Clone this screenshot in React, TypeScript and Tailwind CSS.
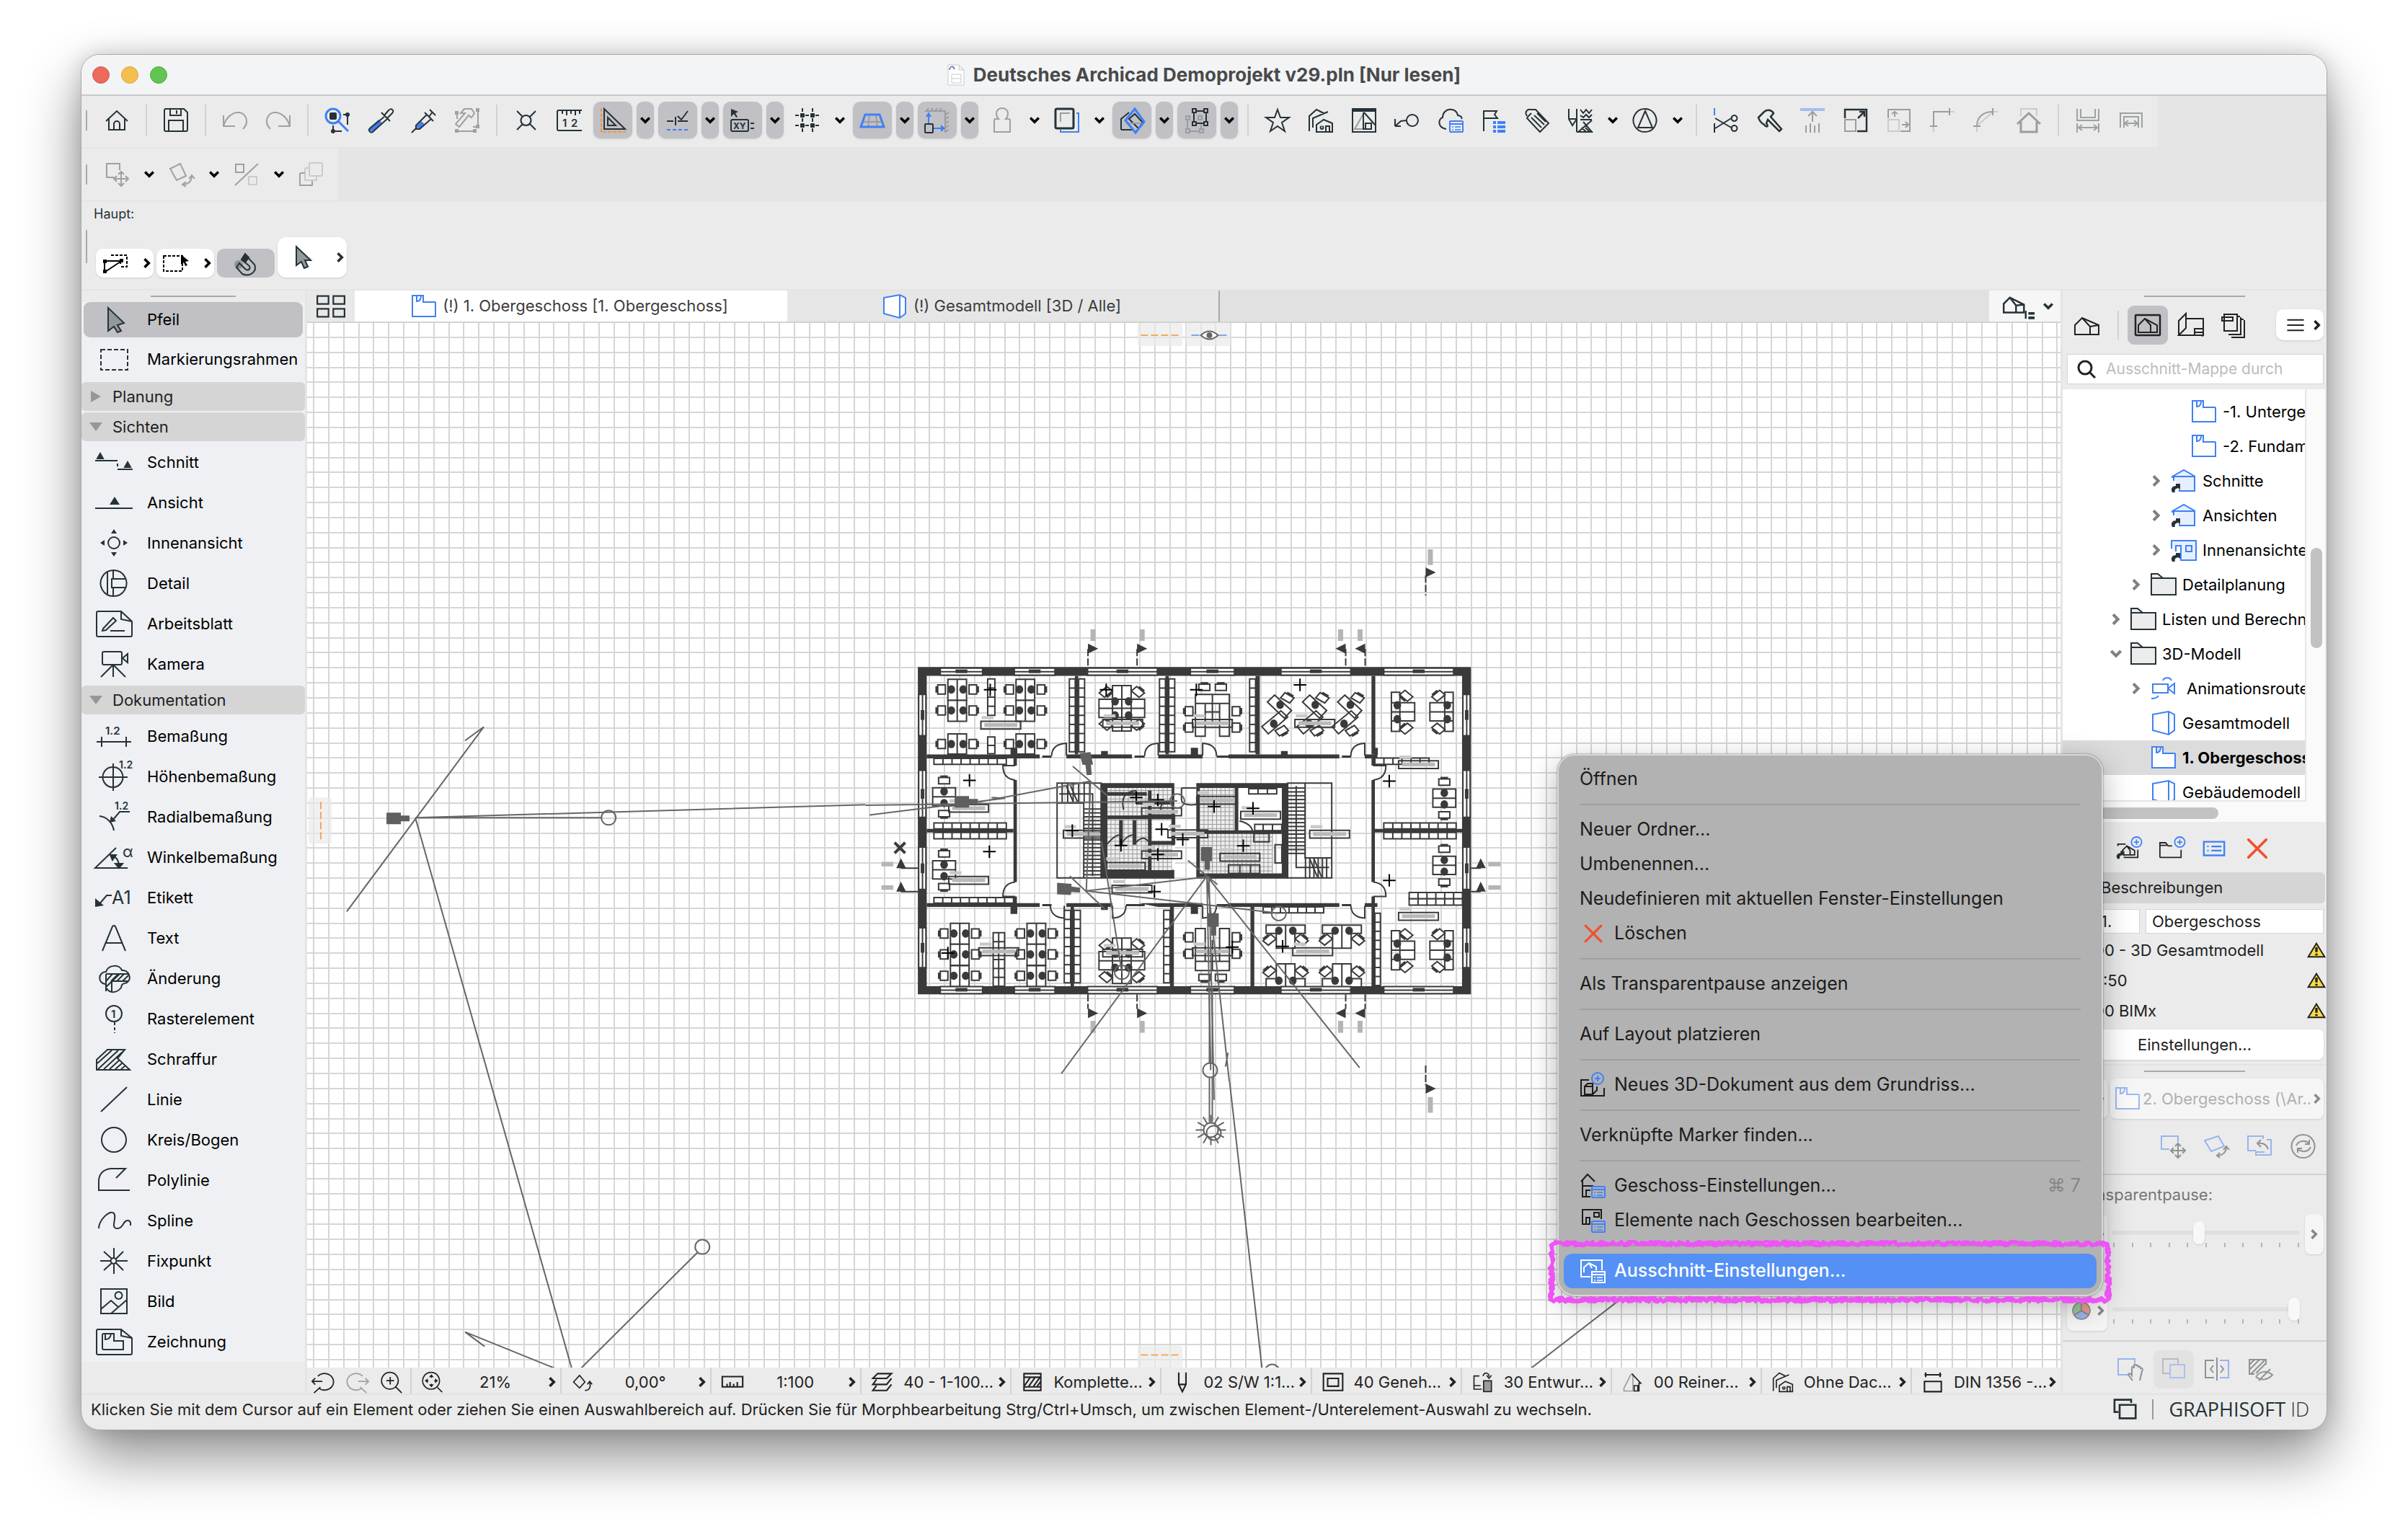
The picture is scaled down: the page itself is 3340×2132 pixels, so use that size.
import type { ReactNode } from "react"

const B = "#4080f5"
const O = "#f0953f"
const G = "#9a9da0"
const L = "#c9cbcd"

const house3d = <path d="M1 31V18L11 8L34 18V31ZM11 8L22 20V31M22 20L34 18" />
const plus = (
  <g stroke={B}>
    <circle cx="26" cy="9" r="8" />
    <path d="M26 5V13M22 9H30" />
  </g>
)
const listBadge = (
  <g stroke={B}>
    <rect x="17" y="19" width="18" height="15" rx="1" />
    <path d="M17 23H35" />
    <path d="M20 27H22M24 27H32M20 31H22M24 31H32" strokeWidth="1.5" />
  </g>
)
const shortcut = <path d="M2 34C-1 28 3 25 7 25V22H13V30L10 28C6 29 5 31 6 34Z" fill="#263238" stroke="none" />

const icons: Record<string, ReactNode> = {
  home: <path d="M3 19L18 5L33 19M7 16V31H29V16M14 31V23A4 4 0 0 1 22 23V31" />,
  save: <path d="M5 2H29L34 7V31A2 2 0 0 1 32 33H4A2 2 0 0 1 2 31V4A2 2 0 0 1 4 2ZM10 2V11H25V2M19 4V9M8 33V18H28V33" />,
  undo: <path d="M2 11V26H18M2 26C5 14 15 6 24 7C34 9 38 21 29 30" />,
  redo: <path d="M34 11V26H18M34 26C31 14 21 6 12 7C2 9 -2 21 7 30" />,
  find: (
    <>
      <circle cx="12" cy="12" r="10" stroke={B} strokeWidth="3" />
      <path d="M19 19L33 33" stroke={B} strokeWidth="3" />
      <rect x="7" y="7" width="10" height="10" rx="2" fill="currentColor" stroke="none" />
      <path d="M32 10V24M26 10H32M12 25V33M12 33H24" />
      <circle cx="32" cy="10" r="3" fill="currentColor" stroke="none" />
      <circle cx="12" cy="33" r="3" fill="currentColor" stroke="none" />
    </>
  ),
  pick: (
    <>
      <path d="M3 32L7 34L20 21L15 17L3 28Z" fill={B} stroke="none" />
      <path d="M23 13L3 29C0 32 4 36 7 34L27 16M19 7L31 19M23 11L29 4C32 0 38 4 34 8L27 15" />
    </>
  ),
  inject: (
    <>
      <path d="M7 27L14 19L19 23L11 30Z" fill={B} stroke="none" />
      <path d="M1 35L7 29M7 30V25L22 10L28 16L12 30ZM19 7L31 19M25 13L30 6M26 3L34 11" />
    </>
  ),
  hammerBox: (
    <>
      <path d="M9 8L14 2H24L28 8L24 14L20 11L7 27L2 23L15 8Z" />
      <path d="M33 6V24M5 33H27M4 8V16M26 27H33" />
      <path d="M1 5H6V10H1ZM30 1H35V6H30ZM1 30H6V35H1ZM26 30H31V35H26ZM30 24H35V29H30Z" fill="currentColor" stroke="none" />
    </>
  ),
  node: <path d="M5 5L13 13M31 5L23 13M5 31L13 23M31 31L23 23M18 11A7 7 0 1 1 17 11Z" />,
  ruler12: (
    <>
      <path d="M35 4H3A2 2 0 0 0 1 6V30A2 2 0 0 0 3 32H35M8 4V9M14 4V11M20 4V9M26 4V11M32 4V9" />
      <text x="8" y="27" fontSize="15" fontWeight="600" fill="currentColor" stroke="none">1</text>
      <text x="20" y="27" fontSize="15" fontWeight="600" fill="currentColor" stroke="none">2</text>
    </>
  ),
  setsquare: (
    <>
      <path d="M6 2L35 30H6ZM11 14L22 25H11Z" />
      <path d="M2 1V34H36" stroke={O} strokeDasharray="5 2" />
    </>
  ),
  guide: (
    <>
      <path d="M3 19H12M18 19H32M15 13V25M18 12L23 17L32 5" />
      <path d="M3 31H34" stroke={B} strokeDasharray="5 3" />
    </>
  ),
  xy: (
    <>
      <path d="M2 2L12 6L8 8L11 13L9 14L6 9L2 13Z" fill="currentColor" stroke="none" />
      <rect x="2" y="17" width="24" height="16" rx="2" />
      <text x="5" y="30" fontSize="12" fontWeight="700" fill="currentColor" stroke="none">XY</text>
      <path d="M29 22H34M29 29H34" />
    </>
  ),
  grid: (
    <>
      <path d="M11 1V35M25 1V35M1 11H35M1 25H35" strokeDasharray="5 2" />
      <path d="M8 11H14M22 11H28M8 25H14M22 25H28M11 8V14M25 8V14M11 22V28M25 22V28" strokeWidth="5" />
    </>
  ),
  persp: (
    <>
      <path d="M4 20H33M14 10L12 27M23 10L25 27" stroke={G} />
      <path d="M8 10H28L34 27H2Z" stroke={B} strokeWidth="3" />
    </>
  ),
  gravity: (
    <>
      <path d="M1 5H29V35M3 5L6 1M9 5L12 1M15 5L18 1M21 5L24 1M29 10L34 7M29 16L34 13M29 22L34 19M29 28L34 25M29 34L34 31" stroke={G} />
      <path d="M6 23V10M13 29H24" stroke={B} />
      <path d="M2 13L6 6L10 13ZM23 24L29 29L23 34Z" fill={B} stroke="none" />
      <rect x="1" y="23" width="11" height="12" rx="1" />
    </>
  ),
  person: <path d="M10 16H13C10 13 10 10 10 8A8 7 0 0 1 26 8C26 10 26 13 23 16H27A2 2 0 0 1 29 18V34H7V18A2 2 0 0 1 10 16Z" />,
  pages: (
    <>
      <rect x="2" y="2" width="25" height="27" rx="2" strokeWidth="3" />
      <path d="M9 20V8H22" stroke={G} />
      <path d="M31 8H34V34H9V31" stroke={B} />
    </>
  ),
  cutcube: (
    <>
      <path d="M3 31V16L14 7M3 31H18M22 9L33 21L27 29L14 16Z" />
      <path d="M14 22H30" stroke={G} />
      <path d="M22 2L35 20L23 35L9 18Z" stroke={B} strokeWidth="3" />
    </>
  ),
  group: (
    <>
      <path d="M3 12H8V17H3ZM20 12H25V17H20ZM3 30H8V35H3ZM22 30H27V35H22ZM5 17V30M8 33H22M24 24V30" stroke={G} />
      <path d="M12 2H17V7H12ZM28 2H33V7H28ZM12 20H17V25H12ZM28 20H33V25H28ZM17 5H28M17 22H28M14 7V20M31 7V20" />
    </>
  ),
  star: <path d="M18 3L22 14H34L24 21L28 33L18 26L8 33L12 21L2 14H14Z" />,
  houses: <path d="M2 33V12L12 3L22 8M7 28V15L28 6M12 34V24L22 17L34 22V34ZM20 26A2 2 0 1 1 19 26M25 34V26H30V34" />,
  facade: (
    <>
      <path d="M2 2H34V34H2ZM18 7L33 24" />
      <path d="M2 2H34V5H2Z" fill="currentColor" />
      <path d="M5 30L17 9V30Z" stroke={G} />
      <path d="M17 7V30H28V22H20V30" />
    </>
  ),
  tagc: <path d="M1 26V16M1 26H9M1 26L9 19L17 18M25 10A8 8 0 1 1 17 19A8 8 0 0 1 25 10" />,
  cloud: (
    <>
      <path d="M12 30C-1 28 1 15 7 14C7 0 26 -1 28 11C34 12 34 15 33 16" />
      {listBadge}
    </>
  ),
  flist: (
    <>
      <path d="M4 33V5H22L19 10L23 15H4M10 15H16" />
      <path d="M17 21H21M23 21H34M17 27H21M23 27H34M17 33H21M23 33H34" stroke={B} strokeWidth="4" />
    </>
  ),
  pencil: <path d="M4 12C0 6 5 2 9 3L16 3L34 22L22 34L4 15C5 12 8 10 10 8M10 14L24 28M14 11L28 24M18 8L30 20" />,
  pencils: <path d="M2 2V16L7 25L13 16V2M13 6V34M2 16H13M18 3L22 8L26 3L30 8L34 3M18 11L22 14L26 10L30 14L34 10M34 18L15 34H34L22 20M20 28L26 34M18 17H34M25 28L31 34" />,
  compass: <path d="M18 2A16 16 0 1 1 17 2ZM18 5L8 28H28Z" />,
  scissors: (
    <>
      <path d="M2 1V11" stroke={B} />
      <path d="M2 22V35M3 15L27 29M3 29L27 14M30 11A4 4 0 1 1 29 11ZM30 25A4 4 0 1 1 29 25Z" />
    </>
  ),
  hammer: <path d="M3 14L11 6C16 2 22 4 24 8L20 13L35 30L32 33L16 17L14 22C18 27 14 28 11 24C6 21 4 18 3 14Z" strokeWidth="2.5" />,
  extend: (
    <>
      <path d="M1 3H35" stroke="#a5bdf0" strokeWidth="4" />
      <path d="M18 20V6M12 12L18 6L24 12M9 25V35M15 22V35M21 25V35M27 22V35" stroke={G} />
    </>
  ),
  resize: (
    <>
      <path d="M3 33H18V17H3Z" stroke={G} />
      <path d="M3 15V3H33V33H20M21 15L30 6M23 6H30V13" strokeWidth="2.5" />
    </>
  ),
  stretch: (
    <>
      <path d="M3 33H18V17H3Z" stroke={L} />
      <path d="M3 15V3H33V33H20M12 13V6M8 9L12 6L16 9M22 24H30M27 20L31 24L27 28" stroke={G} />
    </>
  ),
  corner: (
    <>
      <path d="M6 34V26M28 6H35" stroke={L} />
      <path d="M1 26H11M6 26V6H28M28 1V11" stroke={G} />
    </>
  ),
  fillet: (
    <>
      <path d="M6 34V26M28 6H35M8 24L26 8" stroke={L} />
      <path d="M1 26H11M6 26C6 14 14 6 28 6M28 1V11" stroke={G} />
    </>
  ),
  roofup: (
    <>
      <path d="M7 12V2H29V12" stroke={L} />
      <path d="M2 23L18 8L34 23M7 20V34H29V20" stroke={G} strokeWidth="3" />
    </>
  ),
  span1: <path d="M3 2V18H33V2M8 2V14H28V2M3 22V35M33 22V35M5 28H31M10 24L5 28L10 32M26 24L31 28L26 32" />,
  span2: <path d="M3 28V8H33V28M8 28V13H28V28M10 22H26M14 18L9 22L14 26M22 18L27 22L22 26" />,
  drag: <path d="M14 22H4V3H22V12M24 14V34M14 24H34M20 18L24 14L28 18M20 30L24 34L28 30M18 20L14 24L18 28M30 20L34 24L30 28" />,
  rotate: <path d="M2 10L16 3L24 20L11 26ZM20 32C28 32 32 26 32 20M28 24L32 19L36 24M24 28L19 32L24 35" />,
  mirror: (
    <>
      <path d="M3 4H14V15H3ZM2 33L34 3" />
      <path d="M21 21H32V32H21Z" stroke={L} />
    </>
  ),
  stack: (
    <>
      <rect x="15" y="2" width="18" height="18" rx="2" stroke={L} />
      <path d="M15 9H11A2 2 0 0 0 9 11V26H25V20" stroke={L} />
      <path d="M9 16H4A2 2 0 0 0 2 18V33H19V27" />
    </>
  ),
  selA: (
    <>
      <path d="M12 7H34V23H24" strokeDasharray="4 2" />
      <path d="M3 15H27M3 17V31M4 30L25 16M25 12V19" />
      <path d="M1 13H6V18H1ZM1 27H6V32H1ZM24 12H29V17H24Z" fill="currentColor" stroke="none" />
    </>
  ),
  selB: (
    <>
      <rect x="1" y="8" width="26" height="21" strokeDasharray="4 2" />
      <path d="M25 6L36 15L31 16L34 21L31 22L29 17L25 20Z" fill="currentColor" stroke="none" />
    </>
  ),
  magnet: (
    <>
      <circle cx="8" cy="20" r="6" fill="#8f9497" stroke="none" />
      <path d="M17 6L12 13L23 22C25 27 20 29 17 26L9 18L5 24L13 33C24 38 34 29 30 20Z" />
      <path d="M17 5L12 13L17 17L22 10Z" fill="currentColor" />
    </>
  ),
  arrow: <path d="M9 3V29L16 24L20 33L25 31L21 22H29Z" fill="#93989b" />,
  quad: <path d="M1 5H15V15H1ZM21 5H35V15H21ZM1 21H15V31H1ZM21 21H35V31H21Z" />,
  floor: <path d="M2 3H17V12H33A1 1 0 0 1 34 13V32H2ZM8 3V11C12 11 14 8 14 3" stroke={B} fill="#fff" />,
  cube: <path d="M3 6L25 2L33 6V28L25 34L3 28ZM25 2V34" stroke={B} fill="#fff" />,
  house: house3d,
  houseList: (
    <>
      <path d="M1 25V15L8 8L24 16V25ZM8 8L15 17V25M15 17L24 16" />
      <path d="M26 23V32" />
      <path d="M29 26H36M29 31H36" strokeWidth="3" />
    </>
  ),
  viewmap: (
    <>
      <rect x="1" y="4" width="34" height="28" rx="1" strokeWidth="2.5" />
      <path d="M5 28V18L14 9L31 18V28ZM14 9L22 18V28" />
    </>
  ),
  layout: <path d="M1 32V12L11 2V22L1 32H33A1 1 0 0 0 35 31V9H12M35 23H23V32M23 28H35" />,
  publish: <path d="M4 3H22V26H4ZM1 7H16V12H1ZM27 7V31H10M32 11V35H14M22 6H26M27 10H31" />,
  menu: <path d="M2 8H34M2 18H34M2 28H34" strokeWidth="3" />,
  elev: (
    <>
      <path d="M2 14V12L18 3L34 12M4 12H33V32H12V30" stroke={B} fill="#e6effd" />
      <path d="M4 12H33M4 12V18" stroke={B} />
      {shortcut}
    </>
  ),
  interior: (
    <>
      <path d="M1 16V5H35V32H14V12H7V20" stroke={B} fill="#e6effd" />
      <path d="M21 12H29V20H21Z" stroke={B} />
      {shortcut}
    </>
  ),
  folder: <path d="M1 32V3H10L17 9H35V32ZM1 9H17" fill="#ececec" />,
  anim: <path d="M3 12H24V24H3ZM24 18L33 11V25L24 18M17 7C19 2 27 2 29 7M1 32C6 32 9 31 11 28" stroke={B} />,
  newview: (
    <>
      <path d="M3 14V11H15M12 32H34V20M10 26V21L17 14L29 21V28H12M17 14L22 21V28" />
      {shortcut}
      <g transform="translate(6 -1)">{plus}</g>
    </>
  ),
  newfolder: (
    <>
      <path d="M1 32V9H10L14 14H20M1 32H34V20M1 13H12" />
      <g transform="translate(6 -1)">{plus}</g>
    </>
  ),
  card: <path d="M3 8H33V28H3ZM8 15H10M14 15H29M8 21H10M14 21H29" stroke={B} strokeWidth="2.5" />,
  del: <path d="M5 5L31 31M31 5L5 31" stroke="#ee5330" strokeWidth="4" strokeLinecap="round" />,
  warn: (
    <>
      <path d="M18 4L35 32H1Z" fill="#f7dc45" strokeWidth="3" />
      <path d="M18 12V22M18 25V29" strokeWidth="5" />
    </>
  ),
  dragB: (
    <>
      <path d="M12 22H1V4H24V12" stroke="#97b5ef" />
      <path d="M24 14V34M14 24H34M20 18L24 14L28 18M20 30L24 34L28 30M18 20L14 24L18 28M30 20L34 24L30 28" />
    </>
  ),
  rotB: (
    <>
      <path d="M1 10L20 4L28 18L10 25Z" stroke="#97b5ef" />
      <path d="M18 31C26 31 31 26 31 19M27 23L31 18L35 23M22 27L18 31L22 34" />
    </>
  ),
  backB: (
    <>
      <path d="M12 24H1V4H22V8M27 9H33V30H12V26H24" stroke="#97b5ef" />
      <path d="M29 22C27 16 22 13 15 14M19 9L14 14L19 19" />
    </>
  ),
  sync: <path d="M18 2A16 16 0 1 1 17 2ZM8 17C11 10 20 9 26 14M26 9V15H20M28 19C25 26 16 27 10 22M10 27V21H16" />,
  handB: (
    <>
      <path d="M14 26H1V4H24V10" stroke="#97b5ef" />
      <path d="M21 34L15 26C15 23 18 24 20 27V17C20 14 23 14 23 17V13C23 11 26 11 26 14C27 12 29 12 29 15C31 14 32 15 32 17C34 16 36 18 34 21L31 34" />
    </>
  ),
  overlap: (
    <>
      <path d="M13 24H3V4H24V11M22 12H13V20" stroke="#b9bbbd" />
      <rect x="13" y="12" width="20" height="18" stroke="#aac1ee" />
    </>
  ),
  split: (
    <>
      <path d="M14 6H2V30H14M18 2V34M13 13L9 18L13 23M23 13L27 18L23 23" />
      <path d="M22 6H34V30H22" stroke="#97b5ef" />
    </>
  ),
  hatchEye: <path d="M10 25H3V5H26V12M3 12L10 5M3 19L17 5M5 25L24 6M12 24L26 10M12 29C18 20 27 20 35 26C28 34 19 34 12 29M16 34L32 18" />,
  pie: (
    <>
      <path d="M18 18V3A15 15 0 0 0 5 26Z" fill="#9cc79f" />
      <path d="M18 18V3A15 15 0 0 1 31 26Z" fill="#ec9c8b" />
      <path d="M18 18L5 26A15 15 0 0 0 31 26Z" fill="#97b5ef" />
    </>
  ),
  windows: <path d="M7 22H1V3H27V8M9 11H34V32H9Z" strokeWidth="3" />,
  zback: <path d="M10 9A14 13 0 1 1 12 28M1 17H17M6 12L1 17L6 22M14 26L4 35" />,
  zfwd: <path d="M26 9A14 13 0 1 0 24 28M35 17H19M30 12L35 17L30 22M22 26L32 35" />,
  zin: <path d="M16 3A13 13 0 1 1 15 3ZM25 26L34 35M10 16H22M16 10V22" />,
  zfit: (
    <>
      <path d="M16 2A14 14 0 1 1 15 2ZM26 27L34 35M16 8V11M16 21V24M8 16H11M21 16H24" />
      <path d="M16 5L20 10H12ZM16 27L20 22H12ZM5 16L10 12V20ZM27 16L22 12V20Z" fill="currentColor" stroke="none" />
    </>
  ),
  orient: <path d="M3 18L13 7L22 18L13 28ZM22 32C30 32 32 26 30 18M26 22L30 17L34 22" />,
  scale: <path d="M1 9H35V26H1ZM9 26V21M14 26V18M20 26V21M26 26V18" strokeWidth="2.5" />,
  layers: <path d="M10 4H33L25 12H2ZM8 14L2 22H25L33 12M8 24L2 32H25L33 22" strokeWidth="2.5" />,
  hatch: <path d="M4 4H32V32H4ZM4 10H32M4 26H32M5 24L14 11M12 25L22 11M20 25L30 11M26 25L32 17" strokeWidth="2.5" />,
  pen: <path d="M12 2V22L18 34L24 22V2M12 22H24" strokeWidth="2.5" />,
  frame: <path d="M2 4H34V32H2ZM9 12H27V25H9Z" strokeWidth="2.5" />,
  renov: (
    <>
      <rect x="19" y="16" width="13" height="18" fill={G} />
      <path d="M12 8H3V30H16M18 8C20 1 28 2 28 9M24 7L28 12L32 7M3 24H14" />
    </>
  ),
  house2: (
    <>
      <path d="M15 5L3 28V33H18V5" stroke={G} />
      <path d="M16 4L31 20H28V33H20V24H26V33" />
    </>
  ),
  dim: <path d="M4 6H32M6 2V10M30 2V10M4 17H32V34H4Z" strokeWidth="2.5" />,
  m3d: (
    <>
      <path d="M13 11H2V33H34V22M7 31V20L11 16H18V31ZM7 20H17M18 31L24 25V20" />
      <g transform="translate(-1 0)">{plus}</g>
    </>
  ),
  story: (
    <>
      <path d="M2 12L11 2L21 12M4 10V18H19M4 18V33H15M9 33V24H15" />
      {listBadge}
    </>
  ),
  elem: (
    <>
      <path d="M3 3H31M4 3V23H14V14H9V23M20 7H27V13H20ZM30 3V16" />
      {listBadge}
    </>
  ),
  viewset: (
    <>
      <path d="M15 26H2V3H31V17M6 20V13L13 7L23 12V17M13 7L17 14" />
      <path d="M17 19H35V34H17ZM17 23H35" />
      <path d="M20 27H22M24 27H32M20 31H22M24 31H32" strokeWidth="1.5" />
    </>
  ),
}

const toolIcons: Record<string, ReactNode> = {
  arrow: <path d="M18 3V35L26 29L31 37L36 35L31 27L40 24Z" fill="#93989b" />,
  marquee: <rect x="8" y="6" width="37" height="28" strokeDasharray="6 3" />,
  schnitt: (
    <>
      <path d="M0 18H31M31 22V26M31 30H52" />
      <path d="M3 15L7 8L11 15ZM41 27L45 20L49 27Z" fill="currentColor" />
    </>
  ),
  ansicht: (
    <>
      <path d="M0 28H52" />
      <path d="M20 23L27 12L34 23Z" fill="currentColor" stroke="none" />
    </>
  ),
  innen: (
    <>
      <circle cx="26" cy="20" r="8" />
      <path d="M22 7L26 1L30 7ZM22 33L26 39L30 33ZM13 16L7 20L13 24ZM39 16L45 20L39 24Z" fill="currentColor" stroke="none" />
    </>
  ),
  detail: <path d="M26 2A18 18 0 1 1 25 2ZM17 5V35M25 2V14M25 26V38M43 14H23V26H43" />,
  blatt: <path d="M4 3H36L51 17V36A2 2 0 0 1 49 38H4A2 2 0 0 1 2 36V5A2 2 0 0 1 4 3ZM36 3V14L51 17M11 27L25 12L29 16L15 29L10 30ZM21 30H41" />,
  kamera: <path d="M12 3H35A2 2 0 0 1 37 5V19A2 2 0 0 1 35 21H12A2 2 0 0 1 10 19V5A2 2 0 0 1 12 3ZM38 12L45 6V18ZM25 21V38M25 21L8 38M25 21L42 38" />,
  bem: (
    <>
      <path d="M2 28H50M9 21V35M43 21V35" />
      <text x="14" y="18" fontSize="15" fontWeight="600" fill="currentColor" stroke="none">1.2</text>
    </>
  ),
  hoehe: (
    <>
      <path d="M5 21H45M25 2V40M25 7A14 14 0 1 1 24 7Z" />
      <text x="33" y="9" fontSize="14" fontWeight="600" fill="currentColor" stroke="none">1.2</text>
    </>
  ),
  radial: (
    <>
      <path d="M6 19C16 20 24 28 26 39M24 25L34 13H48" />
      <path d="M20 28L22 19L29 26Z" fill="currentColor" stroke="none" />
      <text x="27" y="10" fontSize="14" fontWeight="600" fill="currentColor" stroke="none">1.2</text>
    </>
  ),
  winkel: (
    <>
      <path d="M0 35H45L0 35L29 7M25 19C30 20 33 26 33 32" />
      <path d="M21 17L29 17L24 24ZM28 29H38L33 35Z" fill="currentColor" />
      <text x="38" y="20" fontSize="22" fill="currentColor" stroke="none">α</text>
    </>
  ),
  etikett: (
    <>
      <path d="M5 30L16 17H23" />
      <path d="M0 21L12 31L0 33Z" fill="currentColor" stroke="none" />
      <text x="23" y="29" fontSize="25" fill="currentColor" stroke="none">A1</text>
    </>
  ),
  text: <path d="M10 38L24 4Q26 2 28 4L42 38M15 27H37" />,
  aend: <path d="M14 28C3 27 4 11 15 11C18 1 34 0 37 9C46 8 52 20 44 26C38 28 37 27 36 33C30 41 20 41 16 34M15 14H46M15 14V38M23 24H46M23 24V40M15 24L24 14M15 32L34 14M22 24L32 14M30 24L40 14M38 24L46 16" />,
  raster: (
    <>
      <circle cx="26" cy="13" r="11" />
      <path d="M27 25V40" strokeDasharray="4 3" />
      <text x="22" y="19" fontSize="15" fontWeight="600" fill="currentColor" stroke="none">1</text>
    </>
  ),
  schraffur: <path d="M2 35V21L17 7H41L31 19L48 35ZM4 34L32 8M12 34L38 10M20 34L33 22M28 34L37 26M36 34L41 30M3 26L23 8" />,
  linie: <path d="M8 37L44 3" />,
  kreis: <circle cx="26" cy="20" r="17" />,
  poly: <path d="M48 34H5V20C6 10 12 5 22 4H42L29 17" />,
  spline: <path d="M5 31C5 20 20 4 26 10C31 16 20 31 31 31C40 31 38 19 46 20Q50 21 49 27" />,
  fix: <path d="M26 2V16M26 24V38M7 20H22M30 20H45M12 7L23 17M39 7L29 17M12 33L23 23M39 33L29 23M26 16A4 4 0 1 1 25 16Z" />,
  bild: <path d="M8 3H44V37H8ZM8 31L22 19L32 28M22 37L44 18M33 7A5 5 0 1 1 32 7Z" />,
  zeichnung: <path d="M4 3H36L51 15V36A2 2 0 0 1 49 38H4A2 2 0 0 1 2 36V5A2 2 0 0 1 4 3ZM36 3V12L51 15M12 9H26V19H39V31H12A2 2 0 0 1 10 29V11A2 2 0 0 1 12 9M14 9V17Q21 17 22 9" />,
}

const Icon = ({ name, className = "size-9" }: { name: string; className?: string }) => (
  <svg viewBox="0 0 36 36" className={`shrink-0 overflow-visible ${className}`} fill="none" stroke="currentColor" strokeWidth="2" aria-hidden="true">
    {icons[name]}
  </svg>
)

const Chevron = ({ down, className = "size-[14px]" }: { down?: boolean; className?: string }) => (
  <svg viewBox="0 0 12 12" className={`shrink-0 ${className}`} fill="none" stroke="currentColor" strokeWidth="3" aria-hidden="true">
    <path d={down ? "M1 3L6 8L11 3" : "M3 1L8 6L3 11"} />
  </svg>
)

const Sep = () => (
  <div className="flex w-[22px] justify-center">
    <div className="h-11 w-[2px] bg-[#d2d2d2]"></div>
  </div>
)

type Tool = { icon: string; on?: boolean; menu?: boolean; off?: boolean }
const bar: (Tool | null)[] = [
  { icon: "home" }, null, { icon: "save" }, null,
  { icon: "undo", off: true }, { icon: "redo", off: true }, null,
  { icon: "find" }, { icon: "pick" }, { icon: "inject" }, { icon: "hammerBox", off: true }, null,
  { icon: "node" }, { icon: "ruler12" },
  { icon: "setsquare", on: true, menu: true }, { icon: "guide", on: true, menu: true }, { icon: "xy", on: true, menu: true },
  { icon: "grid", menu: true }, { icon: "persp", on: true, menu: true }, { icon: "gravity", on: true, menu: true },
  { icon: "person", off: true, menu: true }, { icon: "pages", menu: true }, { icon: "cutcube", on: true, menu: true },
  { icon: "group", on: true, menu: true }, null,
  { icon: "star" }, { icon: "houses" }, { icon: "facade" }, { icon: "tagc" }, { icon: "cloud" }, { icon: "flist" }, { icon: "pencil" },
  { icon: "pencils", menu: true }, { icon: "compass", menu: true }, null,
  { icon: "scissors" }, { icon: "hammer" }, { icon: "extend" }, { icon: "resize" }, { icon: "stretch" }, { icon: "corner" },
  { icon: "fillet" }, { icon: "roofup" }, null,
  { icon: "span1", off: true }, { icon: "span2", off: true },
]

const ToolButton = ({ icon, on, menu, off }: Tool) => (
  <>
    <button
      aria-label={icon}
      className={`mx-[3px] flex h-[51px] w-[54px] items-center justify-center rounded-[10px] ${on ? "bg-[#c0c0c5] shadow-sm" : ""} ${off ? "text-[#9ea1a3]" : ""}`}
    >
      <Icon name={icon} />
    </button>
    {menu && (
      <button aria-label={`${icon} menu`} className={`mx-[3px] flex h-[51px] w-6 items-center justify-center rounded-[9px] text-black ${on ? "bg-[#c0c0c5] shadow-sm" : ""}`}>
        <Chevron down />
      </button>
    )}
  </>
)

const Toolbars = () => (
  <div className="bg-[#e5e5e5]">
    <div className="flex h-[73px]">
      <div className="flex items-center border-b-2 border-[#e5e5e5] bg-[#ebebeb] pr-[7px] pb-1 pl-[6px]">
        <div className="mr-[11px] h-7 w-[2px] bg-[#a9a9a9]"></div>
        {bar.map((t, i) => (t ? <ToolButton key={i} {...t} /> : <Sep key={i} />))}
      </div>
    </div>
    <div className="flex h-[74px]">
      <div className="flex items-center border-b-2 border-[#e5e5e5] bg-[#ebebeb] pr-[7px] pl-[6px]">
        <div className="mr-[11px] h-7 w-[2px] bg-[#a9a9a9]"></div>
        <ToolButton icon="drag" off menu />
        <ToolButton icon="rotate" off menu />
        <ToolButton icon="mirror" off menu />
        <ToolButton icon="stack" off />
      </div>
    </div>
    <div className="h-[123px] border-b-2 border-[#e5e5e5] bg-[#ebebeb] pl-[6px]">
      <p className="pt-[5px] pl-[11px] text-[18px] leading-[24px]">Haupt:</p>
      <div className="flex items-end gap-1 pt-[10px]">
        <div className="mr-[8px] mb-5 h-[46px] w-[2px] bg-[#a9a9a9]"></div>
        <button aria-label="Auswahl" className="flex h-10 w-20 items-center justify-between rounded-[10px] bg-white pr-[2px] pl-[9px] text-black shadow">
          <Icon name="selA" />
          <Chevron />
        </button>
        <button aria-label="Rahmen" className="flex h-10 w-20 items-center justify-between rounded-[10px] bg-white pr-[2px] pl-[9px] text-black shadow">
          <Icon name="selB" />
          <Chevron />
        </button>
        <button aria-label="Magnet" className="flex h-10 w-20 items-center justify-center rounded-[10px] bg-[#c0c0c5]">
          <Icon name="magnet" />
        </button>
        <button aria-label="Pfeil" className="flex h-14 w-24 items-center justify-between rounded-[12px] bg-white pr-[2px] pl-[17px] shadow">
          <Icon name="arrow" />
          <Chevron />
        </button>
      </div>
    </div>
  </div>
)

const sichten = [
  ["schnitt", "Schnitt"], ["ansicht", "Ansicht"], ["innen", "Innenansicht"],
  ["detail", "Detail"], ["blatt", "Arbeitsblatt"], ["kamera", "Kamera"],
]
const doku = [
  ["bem", "Bemaßung"], ["hoehe", "Höhenbemaßung"], ["radial", "Radialbemaßung"], ["winkel", "Winkelbemaßung"],
  ["etikett", "Etikett"], ["text", "Text"], ["aend", "Änderung"], ["raster", "Rasterelement"],
  ["schraffur", "Schraffur"], ["linie", "Linie"], ["kreis", "Kreis/Bogen"], ["poly", "Polylinie"],
  ["spline", "Spline"], ["fix", "Fixpunkt"], ["bild", "Bild"], ["zeichnung", "Zeichnung"],
]

const ToolRow = ({ icon, label, className = "h-14 pl-[19px]" }: { icon: string; label: string; className?: string }) => (
  <button className={`flex items-center gap-5 text-left text-[22px] text-black ${className}`}>
    <svg viewBox="0 0 52 40" className="h-10 w-[52px] shrink-0 overflow-visible text-[#263238]" fill="none" stroke="currentColor" strokeWidth="2" aria-hidden="true">
      {toolIcons[icon]}
    </svg>
    {label}
  </button>
)

const Group = ({ label, open }: { label: string; open?: boolean }) => (
  <button className="my-px flex h-10 items-center gap-[14px] rounded-[6px] bg-[#d5d5d5] pl-[11px] text-[22px]">
    <svg viewBox="0 0 18 18" className="size-[18px] fill-[#93989b]" aria-hidden="true">
      <path d={open ? "M0 3H18L9 15Z" : "M2 1L16 9L2 17Z"} />
    </svg>
    {label}
  </button>
)

const Toolbox = () => (
  <aside className="w-[313px] shrink-0 border-r-[3px] border-[#e5e5e5] bg-[#ebebeb]">
    <div className="flex h-4 items-center justify-center">
      <div className="h-[2px] w-[118px] bg-[#a9a9a9]"></div>
    </div>
    <div className="flex flex-col bg-[#eef0f3]">
      <ToolRow icon="arrow" label="Pfeil" className="mx-[3px] h-[49px] rounded-[9px] bg-[#c0c0c5] pl-4" />
      <ToolRow icon="marquee" label="Markierungsrahmen" className="h-[61px] pl-[19px]" />
      <Group label="Planung" />
      <Group label="Sichten" open />
      {sichten.map(([i, l]) => <ToolRow key={i} icon={i} label={l} />)}
      <div className="flex flex-col py-px">
        <Group label="Dokumentation" open />
      </div>
      {doku.map(([i, l]) => <ToolRow key={i} icon={i} label={l} />)}
    </div>
  </aside>
)

const W = "#3a3a3a"

const Shelf = ({ x, y, w, h, n, v }: { x: number; y: number; w: number; h: number; n: number; v?: boolean }) => (
  <g stroke={W} strokeWidth="2" fill="#fff">
    <rect x={x} y={y} width={w} height={h} />
    {Array.from({ length: n - 1 }, (_, i) => {
      const t = (i + 1) / n
      return <path key={i} d={v ? `M${x} ${y + h * t}h${w}` : `M${x + w * t} ${y}v${h}`} />
    })}
  </g>
)

const Chair = ({ x, y, r = 0 }: { x: number; y: number; r?: number }) => (
  <g transform={`translate(${x} ${y}) rotate(${r})`} stroke={W} strokeWidth="2" fill="#fff">
    <rect x="-9" y="-13" width="18" height="26" />
    <path d="M-12 -9V9" strokeWidth="3" />
  </g>
)

const Person = ({ x, y }: { x: number; y: number }) => <ellipse cx={x} cy={y} rx="9" ry="12" fill={W} />

// two desks side by side with a chair on both sides
const DeskPair = ({ x, y, h = 60 }: { x: number; y: number; h?: number }) => (
  <g>
    <rect x={x - 22} y={y - 29} width="44" height={h} fill="#fff" stroke={W} strokeWidth="2" />
    <path d={`M${x} ${y - 29}v${h}`} stroke={W} strokeWidth="2" />
    <Person x={x - 14} y={y} />
    <Person x={x + 14} y={y} />
    <Chair x={x - 37} y={y} />
    <Chair x={x + 37} y={y} r={180} />
  </g>
)

const Diag = ({ x, y }: { x: number; y: number }) => (
  <g>
    <g stroke={W} strokeWidth="2" fill="#fff">
      <path d={`M${x - 30} ${y - 8}l17 -20l40 44l-17 22zM${x - 43} ${y + 62}l45 -45l16 18l-46 48z`} />
    </g>
    <Person x={x} y={y} />
    <Person x={x - 15} y={y + 54} />
    <Chair x={x + 17} y={y - 20} r={125} />
    <Chair x={x + 4} y={y + 74} r={235} />
  </g>
)

const Island = ({ x, y }: { x: number; y: number }) => (
  <g>
    <g stroke={W} strokeWidth="2" fill="#fff">
      <path d={`M${x - 22} ${y - 65}h44v130h-44zM${x - 54} ${y - 26}h108v52h-108zM${x - 54} ${y}h108M${x} ${y - 65}v130`} />
    </g>
    {[-1, 1].map((a) =>
      [-1, 1].map((b) => (
        <g key={`${a}${b}`}>
          <Person x={x + a * 16} y={y + b * 20} />
          <Chair x={x + a * 38} y={y + b * 47} r={a * b > 0 ? 225 : 135} />
        </g>
      )),
    )}
  </g>
)

const Corner = ({ x, y }: { x: number; y: number }) => (
  <g>
    {[-1, 1].map((s) => (
      <g key={s}>
        <g stroke={W} strokeWidth="2" fill="#fff">
          <path d={`M${x + s * 73} ${y - 56}v112h${-s * 20}v-112zM${x + s * 73} ${y - 26}h${-s * 55}v52h${s * 55}M${x + s * 73} ${y}h${-s * 55}`} />
        </g>
        <Person x={x + s * 59} y={y - 19} />
        <Person x={x + s * 59} y={y + 21} />
        <Chair x={x + s * 38} y={y - 46} r={s * 45} />
        <Chair x={x + s * 38} y={y + 48} r={-s * 45} />
      </g>
    ))}
  </g>
)

const Meeting = ({ x, y, s }: { x: number; y: number; s: number }) => (
  <g>
    <path
      d={`M${x - 40} ${y - s * 60}h80v${s * 26}h-80zM${x - 40} ${y - s * 34}v${s * 94}h23v${-s * 94}M${x + 40} ${y - s * 34}v${s * 94}h-23v${-s * 94}M${x} ${y - s * 60}v${s * 26}M${x - 17} ${y - s * 10}h34M${x} ${y - s * 34}v${s * 62}`}
      fill="#fff" stroke={W} strokeWidth="2"
    />
    {[12, -35].map((d) => (
      <g key={d}>
        <Chair x={x - 55} y={y - s * d} />
        <Chair x={x + 56} y={y - s * d} r={180} />
      </g>
    ))}
    <Chair x={x - 19} y={y - s * 80} r={s * 90} />
    <Chair x={x + 20} y={y - s * 80} r={s * 90} />
  </g>
)

const Single = ({ x, y }: { x: number; y: number }) => (
  <g>
    <path d={`M${x - 27} ${y - 26}h54v52h-54zM${x - 27} ${y}h54`} fill="#fff" stroke={W} strokeWidth="2" />
    <Person x={x} y={y - 15} />
    <Person x={x} y={y + 18} />
    <Chair x={x} y={y - 46} r={90} />
    <Chair x={x} y={y + 48} r={270} />
  </g>
)

const labels = [
  [320, 548], [608, 543], [820, 543], [1062, 543], [1307, 661], [244, 786], [244, 992], [515, 860], [1097, 860], [700, 796], [700, 919],
  [630, 1017], [830, 763], [934, 806], [885, 926], [614, 952], [762, 859], [315, 1196], [608, 1200], [820, 1196], [1057, 1196], [1307, 1095],
]
const crosses = [
  [246, 706], [293, 910], [1027, 433], [1238, 708], [1238, 992], [683, 1024], [195, 1200], [986, 1181], [569, 447], [782, 447], [295, 447],
  [750, 875], [700, 846], [640, 755], [691, 762], [824, 781], [916, 786], [489, 850], [604, 892], [691, 918], [893, 893], [867, 1183],
]
const winX = [[177, 277], [352, 448], [525, 690], [768, 872], [982, 1147], [1225, 1390]]
const winY = [[460, 578], [677, 812], [897, 1018], [1128, 1242]]
const steps = (a: number, b: number, n: number) => Array.from({ length: n }, (_, i) => a + ((b - a) * i) / (n - 1))

const FloorPlan = () => (
  <g transform="translate(1200 740) scale(0.58673 0.48469)" className="[&_*]:[vector-effect:non-scaling-stroke]">
    {/* furniture */}
    {[217, 378].map((x) => (
      <g key={x}>
        <DeskPair x={x} y={446} />
        <DeskPair x={x} y={506} />
        <DeskPair x={x} y={602} h={58} />
      </g>
    ))}
    {[223, 404].map((x) => [1144, 1204, 1265].map((y) => <DeskPair key={`${x}${y}`} x={x} y={y} />))}
    <Island x={606} y={500} />
    <Island x={606} y={1222} />
    <Meeting x={820} y={520} s={1} />
    <Meeting x={820} y={1190} s={-1} />
    <Diag x={980} y={490} />
    <Diag x={1063} y={490} />
    <Diag x={1146} y={490} />
    <Corner x={1316} y={510} />
    <Corner x={1316} y={1192} />
    <Single x={186} y={753} />
    <Single x={186} y={962} />
    <Single x={1368} y={757} />
    <Single x={1368} y={949} />
    {[993, 1126].map((x) => (
      <g key={x}>
        <path d={`M${x - 46} 1120h92v24h-24v42h-44v-42h-24zM${x} 1120v66M${x - 46} 1295v-22h24v-42h44v42h24v22M${x} 1231v64`} fill="#fff" stroke={W} strokeWidth="2" />
        {[1136, 1279].map((y) => (
          <g key={y}>
            <Person x={x - 16} y={y} />
            <Person x={x + 17} y={y} />
            <Chair x={x - 38} y={y + (y > 1200 ? -26 : 26)} r={45} />
            <Chair x={x + 38} y={y + (y > 1200 ? -26 : 26)} r={135} />
          </g>
        ))}
      </g>
    ))}
    <Shelf x={289} y={416} w={17} h={104} n={4} v />
    <Shelf x={289} y={582} w={17} h={48} n={2} v />
    <Shelf x={302} y={1142} w={27} h={153} n={6} v />
    <path d="M315 1142V1295" stroke={W} strokeWidth="2" />
    <Shelf x={482} y={416} w={14} h={208} n={8} v />
    <Shelf x={504} y={416} w={14} h={208} n={8} v />
    <Shelf x={695} y={416} w={14} h={208} n={8} v />
    <Shelf x={717} y={416} w={14} h={208} n={8} v />
    <Shelf x={908} y={416} w={14} h={208} n={8} v />
    <Shelf x={470} y={1078} w={15} h={207} n={8} v />
    <Shelf x={493} y={1078} w={15} h={207} n={8} v />
    <Shelf x={705} y={1078} w={15} h={207} n={8} v />
    <Shelf x={1204} y={1086} w={13} h={207} n={8} v />
    <Shelf x={162} y={643} w={171} h={17} n={8} />
    <Shelf x={162} y={828} w={171} h={17} n={8} />
    <Shelf x={162} y={855} w={171} h={18} n={8} />
    <Shelf x={162} y={1041} w={188} h={16} n={9} />
    <Shelf x={1204} y={642} w={128} h={18} n={6} />
    <Shelf x={1225} y={828} w={171} h={17} n={8} />
    <Shelf x={1225} y={855} w={171} h={18} n={8} />
    <Shelf x={1285} y={1027} w={126} h={18} n={6} />
    <Shelf x={1285} y={1045} w={126} h={18} n={6} />
    <Shelf x={940} y={1068} w={143} h={17} n={7} />

    {/* outer walls with windows */}
    <path d="M124 382H1431V1318H124ZM145 407V1295H1410V407Z" fill={W} fillRule="evenodd" />
    {winX.map(([a, b]) =>
      [385, 1296].map((y) => (
        <g key={`${a}${y}`} stroke={W} strokeWidth="2">
          <rect x={a} y={y} width={b - a} height="20" fill="#fff" />
          <path d={`M${a} ${y + 10}H${b}`} />
          <path d={`M${(a + b) / 2 - 14} ${y + 9}h28`} strokeWidth="5" />
        </g>
      )),
    )}
    {winY.map(([a, b]) =>
      [126, 1412].map((x) => (
        <g key={`${a}${x}`} stroke={W} strokeWidth="2">
          <rect x={x} y={a} width="17" height={b - a} fill="#fff" />
          <path d={`M${x + 9} ${a}V${b}`} />
          <path d={`M${x + 9} ${(a + b) / 2 - 14}v28`} strokeWidth="5" />
        </g>
      )),
    )}

    {/* inner walls */}
    <g fill={W}>
      {[632, 1057].map((y) => (
        <path key={y} d={`M145 ${y}H412V${y + 11}H145ZM418 ${y + 3}H440V${y + 9}H418ZM475 ${y}H${y > 900 ? 584 : 630}V${y + 11}H475ZM${y > 900 ? 616 : 636} ${y + 3}H660V${y + 9}H${y > 900 ? 616 : 636}ZM${y > 900 ? 645 : 692} ${y}H797V${y + 11}H692ZM830 ${y + 3}H858V${y + 9}H830ZM858 ${y}H1120V${y + 11}H858ZM1126 ${y + 3}H1148V${y + 9}H1126ZM1180 ${y}H1210V${y + 11}H1180Z`} />
      ))}
      <path d="M495 407h8v225h-8zM709 407h8v225h-8zM922 407h10v225h-10zM1196 407h9v225h-9zM485 1067h8v228h-8zM720 1067h9v228h-9zM910 1067h9v228h-9zM1196 1067h8v228h-8z" />
      <path d="M350 643h8v21h-8zM350 705h8v292h-8zM350 1038h8v25h-8zM1196 643h8v21h-8zM1196 705h8v292h-8zM1196 1038h8v25h-8z" />
      <path d="M145 845h205v10h-205zM1204 845h207v10h-207z" />
      <path d="M343 613h16v22h-16zM343 1065h16v23h-16zM557 622h16v14h-16zM769 613h17v20h-17zM982 622h16v14h-16zM1202 613h9v20h-9zM769 1065h17v23h-17zM557 1065h16v12h-16z" />
    </g>
    <path
      d="M475 635V600Q441 602 440 636M692 635V600Q660 602 660 636M797 635V600Q829 602 830 636M1180 635V600Q1148 602 1147 636M470 1065V1100Q438 1098 437 1064M584 1065V1100Q616 1098 616 1064M797 1065V1100Q829 1098 830 1064M1180 1065V1100Q1148 1098 1147 1064M354 664H325Q325 702 354 705M354 1038H325Q325 1000 354 997M1200 664H1230Q1230 702 1200 705M1200 1038H1230Q1230 1000 1200 997"
      fill="none" stroke={W} strokeWidth="2"
    />

    {/* core with tiled rooms */}
    <rect x="563" y="720" width="162" height="260" fill="#eee" />
    <rect x="788" y="720" width="90" height="130" fill="#eee" />
    <rect x="788" y="855" width="176" height="117" fill="#eee" />
    <g stroke="#9a9a9a" strokeWidth="1">
      {steps(570, 724, 16).map((x) => <path key={x} d={`M${x} 728V965`} />)}
      {steps(790, 870, 9).map((x) => <path key={x} d={`M${x} 728V972`} />)}
      {steps(880, 962, 9).map((x) => <path key={x} d={`M${x} 858V972`} />)}
      {steps(735, 965, 20).map((y) => <path key={y} d={`M570 ${y}H724M790 ${y}H${y > 855 ? 962 : 870}`} />)}
    </g>
    <path d="M557 714H730V987H557ZM572 728V963H724V728Z" fill={W} fillRule="evenodd" />
    <path d="M782 714H998V987H782ZM790 728V972H984V728Z" fill={W} fillRule="evenodd" />
    <rect x="884" y="728" width="100" height="120" fill="#fff" />
    <rect x="724" y="892" width="8" height="70" fill="#fff" />
    <path
      d="M572 812H724M604 820V890M636 820V890M672 735V965M672 808H728V885H672M640 770H724M877 728V855M790 854H984M572 745H665"
      fill="none" stroke={W} strokeWidth="5"
    />
    <rect x="678" y="820" width="42" height="58" fill="#fff" />
    <path
      d="M572 888Q590 860 604 862M604 888Q620 860 636 862M636 888Q655 860 668 880M610 790Q600 740 640 735M700 795Q690 770 724 765M747 728H782M747 728V760Q747 780 782 775M884 822Q912 830 915 852M906 730h66v15h-66zM920 832h64v18h-64zM918 858h36v24h-36zM858 948h74v24h-74zM968 890h16v52h-16zM928 730v15M950 730v15M940 832v18M962 832v18M885 948v24M910 948v24"
      fill="none" stroke={W} strokeWidth="2"
    />

    {/* stairs */}
    <g stroke={W} strokeWidth="2" fill="none">
      <rect x="453" y="714" width="104" height="271" />
      <path d="M453 771H516V985M458 745H537V980M475 722L492 770M485 722L502 770" />
      {steps(788, 976, 18).map((y) => <path key={y} d={`M516 ${y}H557`} />)}
      {steps(465, 530, 6).map((x) => <path key={x} d={`M${x} 714V771`} />)}
      <rect x="998" y="714" width="104" height="271" />
      <path d="M1039 714V928H1102M1018 722V955H1096M1050 930L1068 982M1060 930L1078 982" />
      {steps(728, 915, 18).map((y) => <path key={y} d={`M998 ${y}H1039`} />)}
      {steps(1040, 1090, 6).map((x) => <path key={x} d={`M${x} 928V985`} />)}
    </g>

    {labels.map(([x, y]) => (
      <g key={`${x}${y}`}>
        <rect x={x - 47} y={y - 11} width="94" height="22" fill="none" stroke={W} strokeWidth="2" />
        <rect x={x - 39} y={y - 6} width="78" height="11" fill="#b9b9b9" />
        <rect x={x - 45} y={y - 26} width="28" height="9" fill="#c9c9c9" />
      </g>
    ))}
    {crosses.map(([x, y]) => (
      <path key={`${x}${y}`} d={`M${x - 15} ${y}h30M${x} ${y - 18}v36`} stroke="#000" strokeWidth="2" />
    ))}

    {/* section flags */}
    {[[526, 1], [642, 1], [1135, -1], [1181, -1]].map(([x, s]) => (
      <g key={x} fill={W}>
        <path d={`M${x} 315v28l${s * 24} -14zM${x} 1358v28l${s * 24} -14z`} />
        <path d={`M${x} 330V382M${x} 1318V1360`} stroke={W} strokeWidth="2" strokeDasharray="10 3" />
        <rect x={x + s * 12 - 6} y="274" width="12" height="33" fill="#b5b5b5" />
        <rect x={x + s * 12 - 6} y="1394" width="12" height="34" fill="#b5b5b5" />
      </g>
    ))}
    <path d="M1324 97v28l24 -14zM1324 1574v28l24 -14z" fill={W} />
    <path d="M1324 120V177M1324 1522V1578" stroke={W} strokeWidth="2" strokeDasharray="10 3" />
    <path d="M1329 45h12v45h-12zM1329 1612h12v45h-12z" fill="#b5b5b5" />
    {[957, 1024].map((y) => (
      <g key={y}>
        <path d={`M73 ${y}l11 -28l12 28zM1443 ${y}l11 -28l12 28z`} fill={W} />
        <path d={`M84 ${y}H124M1431 ${y}H1454`} stroke={W} strokeWidth="2" />
        <path d={`M38 ${y - 18}h28v13h-28zM1472 ${y - 18}h29v13h-29z`} fill="#b5b5b5" />
      </g>
    ))}
    <path d="M69 884L94 914M94 884L69 914" stroke={W} strokeWidth="4" />

    {/* cameras and their view cones */}
    <g fill="none" stroke="#666" strokeWidth="2">
      <path d="M0 777L737 765M10 805L330 757L298 755M268 768L532 708M490 666L572 750M532 708L522 1022M522 1022L807 982M483 980L566 1074M522 1022L977 1086M558 880L606 1255M762 935L832 1004M807 980L463 1545M807 980L1168 1528M807 980L816 1535M812 980L824 1620M807 980L860 1568M851 1525L857 1485" />
      {[[737, 765], [977, 1087], [606, 1255]].map(([x, y]) => <ellipse key={x} cx={x} cy={y} rx="17" ry="20" />)}
    </g>
    <path d="M211 751h34v8h21v16h-21v9h-34zM506 628l26 -3l6 35l-5 2l2 28l-12 1l-3 -29l-7 -1zM453 999l34 3v8l20 3v14l-20 -2l-2 9l-32 -2zM793 897h26v40h-5v25h-12v-25h-9zM809 1086h26v39h-6v25h-12v-25h-8z" fill="#5f5f5f" />
  </g>
)

const Canvas = () => (
  <svg viewBox="426 448 2431 1450" preserveAspectRatio="xMinYMin slice" className="h-full w-full bg-white" role="img" aria-label="1. Obergeschoss">
    <g stroke="#d6d6d6" strokeWidth="2" shapeRendering="crispEdges">
      {Array.from({ length: 117 }, (_, i) => {
        const x = Math.round(435 + i * 20.84)
        return <path key={x} d={`M${x} 448V1898`} />
      })}
      {Array.from({ length: 70 }, (_, i) => {
        const y = Math.round(447 + i * 20.84)
        return <path key={y} d={`M426 ${y}H2857`} />
      })}
    </g>
    <g fill="#e9e9e9" fillOpacity="0.7">
      <rect x="1577" y="448" width="63" height="32" rx="4" />
      <rect x="1644" y="448" width="63" height="32" rx="4" />
      <rect x="428" y="1106" width="32" height="64" rx="4" />
      <rect x="1577" y="1866" width="63" height="32" rx="4" />
    </g>
    <path d="M1582 465H1636M445 1112V1164M1582 1879H1636" stroke="#f3a860" strokeWidth="2" strokeDasharray="10 4" />
    <path d="M1652 465H1663M1690 465H1701" stroke="#7fa6f2" strokeWidth="2" />
    <path d="M1665 465Q1677 454 1689 465Q1677 476 1665 465Z" fill="#fff" stroke="#666" strokeWidth="2" />
    <circle cx="1677" cy="465" r="4" fill="#666" />
    <FloorPlan />
    <g fill="none" stroke="#666" strokeWidth="2">
      <path d="M481 1264L671 1008L645 1027M576 1134L1200 1116M576 1134H834M576 1134L793 1898M645 1847L771 1898M645 1847L672 1867M805 1898L967 1737M1705 1500L1750 1898M2122 1898L2249 1800M1677 1370V1474M1681 1370V1474M1677 1494V1556M1681 1494V1556" />
      <circle cx="844" cy="1134" r="10" />
      <circle cx="974" cy="1729" r="10" />
      <circle cx="1678" cy="1484" r="10" />
      <circle cx="1764" cy="1902" r="10" />
      <circle cx="1679" cy="1567" r="10" />
      <circle cx="1683" cy="1571" r="10" />
      {Array.from({ length: 12 }, (_, i) => (
        <path key={i} d="M1679 1557V1546" transform={`rotate(${i * 30} 1679 1567)`} />
      ))}
    </g>
    <path d="M536 1127H556V1131H568V1139H556V1143H536Z" fill="#5f5f5f" />
  </svg>
)

const quick = [
  ["zfit", "21%", "c"], ["orient", "0,00°", "c"], ["scale", "1:100", "c"], ["layers", "40 - 1-100…", ""],
  ["hatch", "Komplette…", ""], ["pen", "02 S/W 1:1…", ""], ["frame", "40 Geneh…", ""], ["renov", "30 Entwur…", ""],
  ["house2", "00 Reiner…", ""], ["houses", "Ohne Dac…", ""], ["dim", "DIN 1356 -…", ""],
]

const Center = () => (
  <main className="flex min-w-0 flex-1 flex-col">
    <div className="flex h-[45px] border-b-2 border-[#d2d2d2] bg-[#e1e1e1] text-[22px] text-[#3c3c3c]">
      <button aria-label="Registerkarten" className="flex w-[66px] items-center justify-center bg-[#e8e8e8] text-[#263238]">
        <Icon name="quad" className="size-10" />
      </button>
      <button className="flex w-[600px] items-center justify-center gap-2 bg-white pr-1">
        <Icon name="floor" />
        (!) 1. Obergeschoss [1. Obergeschoss]
      </button>
      <button className="flex w-[600px] items-center justify-center gap-2 border-r-2 border-[#a9a9a9] bg-[#e6e6e6] pr-1">
        <Icon name="cube" />
        (!) Gesamtmodell [3D / Alle]
      </button>
      <button aria-label="Ansicht" className="ml-auto flex w-[99px] items-center justify-center gap-3 bg-[#f6f6f6] pl-2 text-[#263238]">
        <Icon name="houseList" className="size-11" />
        <Chevron down />
      </button>
    </div>
    <div className="relative min-h-0 flex-1">
      <div className="absolute inset-0">
        <Canvas />
      </div>
    </div>
    <div className="flex h-9 bg-[#ebebeb] text-[22px] whitespace-nowrap">
      <div className="flex w-[143px] items-center justify-between pt-1 pr-[10px] pl-[6px]">
        <button aria-label="Zurück"><Icon name="zback" className="size-8" /></button>
        <button aria-label="Vor" className="text-[#9ea1a3]"><Icon name="zfwd" className="size-8" /></button>
        <button aria-label="Vergrößern"><Icon name="zin" className="size-8" /></button>
      </div>
      {quick.map(([icon, label, c]) => (
        <button key={label} className="flex min-w-0 flex-1 items-center border-l-2 border-[#d2d2d2] pt-1 pr-1 pl-[14px]">
          <Icon name={icon} className="size-[30px]" />
          <span className={c ? "flex-1 text-center" : "flex-1 pl-[14px] text-left"}>{label}</span>
          <Chevron />
        </button>
      ))}
    </div>
  </main>
)

type Node = { label: string; icon: string; pad: string; arrow?: "r" | "d"; sel?: boolean; wide?: boolean }
const tree: Node[] = [
  { label: "-1. Untergeschoss", icon: "floor", pad: "pl-[138px]" },
  { label: "-2. Fundamente", icon: "floor", pad: "pl-[138px]" },
  { label: "Schnitte", icon: "elev", pad: "pl-[110px]", arrow: "r" },
  { label: "Ansichten", icon: "elev", pad: "pl-[110px]", arrow: "r" },
  { label: "Innenansichten", icon: "interior", pad: "pl-[110px]", arrow: "r" },
  { label: "Detailplanung", icon: "folder", pad: "pl-[82px]", arrow: "r" },
  { label: "Listen und Berechnungen", icon: "folder", pad: "pl-[54px]", arrow: "r" },
  { label: "3D-Modell", icon: "folder", pad: "pl-[54px]", arrow: "d" },
  { label: "Animationsroute", icon: "anim", pad: "pl-[82px]", arrow: "r", wide: true },
  { label: "Gesamtmodell", icon: "cube", pad: "pl-[82px]" },
  { label: "1. Obergeschoss", icon: "floor", pad: "pl-[82px]", sel: true },
  { label: "Gebäudemodell", icon: "cube", pad: "pl-[82px]" },
]

const Slider = ({ label, value }: { label: string; value: number }) => (
  <div className="flex flex-1 flex-col justify-center">
    <input
      type="range"
      aria-label={label}
      defaultValue={value}
      className="h-8 w-full appearance-none bg-transparent [&::-webkit-slider-runnable-track]:h-[6px] [&::-webkit-slider-runnable-track]:rounded-full [&::-webkit-slider-runnable-track]:bg-[#e0e0e0] [&::-webkit-slider-thumb]:mt-[-13px] [&::-webkit-slider-thumb]:h-8 [&::-webkit-slider-thumb]:w-4 [&::-webkit-slider-thumb]:appearance-none [&::-webkit-slider-thumb]:rounded-[8px] [&::-webkit-slider-thumb]:bg-[#f8f8f8] [&::-webkit-slider-thumb]:shadow"
    />
    <div className="mt-[-2px] flex h-[6px] justify-between px-px">
      {Array.from({ length: 11 }, (_, i) => <div key={i} className="w-[2px] bg-[#b5b5b5]"></div>)}
    </div>
  </div>
)

const SmallButton = ({ label, children, className = "w-14 pr-[2px]" }: { label: string; children: ReactNode; className?: string }) => (
  <button aria-label={label} className={`flex h-14 items-center justify-end gap-[6px] rounded-[8px] bg-[#f5f5f5] text-[#888] shadow-sm ${className}`}>
    {children}
  </button>
)

const Navigator = () => (
  <aside className="flex w-[369px] shrink-0 flex-col border-l-[3px] border-[#e5e5e5] bg-[#ebebeb] text-[22px]">
    <div className="flex h-4 items-center justify-center">
      <div className="h-[2px] w-[140px] bg-[#a9a9a9]"></div>
    </div>
    <div className="flex h-[62px] items-center pt-px pr-[4px] pl-4">
      <button aria-label="Projekt"><Icon name="house" /></button>
      <div className="mx-3 ml-6 h-10 w-[2px] bg-[#d2d2d2]"></div>
      <button aria-label="Ausschnitte" className="flex h-[54px] w-14 items-center justify-center rounded-[9px] bg-[#c0c0c5]"><Icon name="viewmap" /></button>
      <button aria-label="Layouts" className="ml-[14px]"><Icon name="layout" /></button>
      <button aria-label="Publisher" className="ml-6"><Icon name="publish" /></button>
      <button aria-label="Optionen" className="ml-auto flex h-[43px] w-[66px] items-center justify-end gap-[10px] rounded-[10px] bg-white pr-[2px] shadow">
        <Icon name="menu" className="size-[26px]" />
        <Chevron />
      </button>
    </div>
    <label className="mr-[4px] ml-[6px] mt-[10px] flex h-[42px] items-center gap-[14px] border border-[#d5d5d5] bg-white pr-14 pl-[13px]">
      <svg viewBox="0 0 26 26" className="size-[26px] shrink-0" fill="none" stroke="#222" strokeWidth="3" aria-hidden="true">
        <circle cx="11" cy="11" r="9" />
        <path d="M17 17L25 25" />
      </svg>
      <input type="text" aria-label="Suche" placeholder="Ausschnitt-Mappe durchsuchen" className="w-full min-w-0 text-[21px] outline-none placeholder:text-[#bcbcbc]" />
    </label>
    <div className="mt-[7px] mr-[2px] flex bg-[#fafafa]">
      <div className="h-[572px] min-w-0 flex-1 overflow-hidden border-r-2 border-b-2 border-[#e6e6e6] bg-white pt-[7px] text-black">
        {tree.map((n) => (
          <div key={n.label} className={`flex h-12 items-center whitespace-nowrap ${n.pad} ${n.sel ? "bg-[#dcdcdc] font-bold" : ""}`}>
            <span className="flex w-10 shrink-0 justify-center text-[#808080]">
              {n.arrow && <Chevron down={n.arrow === "d"} className="size-4" />}
            </span>
            <span className={`shrink-0 text-[#263238] ${n.wide ? "w-[50px]" : "w-[44px]"}`}><Icon name={n.icon} /></span>
            {n.label}
          </div>
        ))}
      </div>
      <div className="w-[26px] pt-[220px] pl-[6px]">
        <div className="h-[139px] w-4 rounded-full bg-[#c2c2c2]"></div>
      </div>
    </div>
    <div className="mr-[2px] h-7 bg-[#fafafa] pt-2">
      <div className="h-4 w-[216px] rounded-full bg-[#c2c2c2]"></div>
    </div>
    <div className="flex h-[70px] items-center gap-6 pt-1 pl-[72px]">
      {["newview", "newfolder", "card", "del"].map((i) => (
        <button key={i} aria-label={i} className="flex w-9 justify-center"><Icon name={i} className={i === "del" || i === "card" ? "size-[34px]" : "size-8"} /></button>
      ))}
    </div>
    <div className="mr-[2px] ml-1 flex h-[43px] items-center rounded-[6px] bg-[#d5d5d5] pl-[49px]">Beschreibungen</div>
    <div className="mt-2 mr-[4px] ml-1 flex h-[34px] gap-2">
      <input type="text" aria-label="Nummer" defaultValue="1." className="w-[103px] border border-[#d5d5d5] bg-white pl-[48px]" />
      <input type="text" aria-label="Name" defaultValue="Obergeschoss" className="min-w-0 flex-1 border border-[#d5d5d5] bg-white pl-2" />
    </div>
    <div className="mt-[2px] mr-[2px] mb-[5px]">
      {[["00 - 3D Gesamtmodell", "pl-[44px]"], ["1:50", "pl-[47px]"], ["00 BIMx", "pl-[44px]"]].map(([t, p]) => (
        <div key={t} className={`flex h-[42px] items-center justify-between ${p}`}>
          {t}
          <Icon name="warn" className="size-6" />
        </div>
      ))}
    </div>
    <button className="mr-[4px] ml-1 h-[42px] rounded-[8px] bg-white shadow">Einstellungen...</button>
    <div className="mt-[6px] flex h-[18px] items-center justify-center border-t-2 border-[#e3e3e3]">
      <div className="h-[2px] w-[140px] bg-[#a9a9a9]"></div>
    </div>
    <div className="mt-[2px] mr-[4px] ml-[6px] flex gap-1">
      <SmallButton label="Referenz"><Chevron /></SmallButton>
      <div className="flex h-14 min-w-0 flex-1 items-center gap-[3px] rounded-[8px] bg-[#f5f5f5] pr-[2px] pl-[6px] text-[#8c8c8c] shadow-sm">
        <Icon name="floor" className="size-9 opacity-50" />
        <select aria-label="Referenzgeschoss" disabled className="min-w-0 flex-1 appearance-none text-[22px] text-[#b0b0b0] opacity-100">
          <option>2. Obergeschoss (\Ar…</option>
        </select>
        <Chevron />
      </div>
    </div>
    <div className="flex h-[78px] items-center justify-end gap-6 border-b-2 border-[#d2d2d2] pr-[14px] text-[#8f9294]">
      {["dragB", "rotB", "backB", "sync"].map((i) => <button key={i} aria-label={i}><Icon name={i} /></button>)}
    </div>
    <p className="flex h-[54px] items-center pl-[13px] text-[#777]">Transparentpause:</p>
    <div className="mr-[4px] ml-[6px] flex items-center gap-[7px]">
      <SmallButton label="Farbe"><Chevron /></SmallButton>
      <Slider label="Transparentpause Deckkraft" value={46} />
      <SmallButton label="Mehr" className="w-[26px] pr-[6px]"><Chevron /></SmallButton>
    </div>
    <div className="mt-[50px] mr-[37px] mb-[13px] ml-[6px] flex items-center gap-[7px]">
      <SmallButton label="Farbe aktiv">
        <Icon name="pie" className="size-[28px]" />
        <Chevron />
      </SmallButton>
      <Slider label="Aktiv Deckkraft" value={100} />
    </div>
    <div className="flex flex-1 items-center gap-1 border-t-2 border-[#d2d2d2] pt-1 pl-[66px] text-[#8f9294]">
      {["handB", "overlap", "split", "hatchEye"].map((i) => (
        <button key={i} aria-label={i} className={`flex h-[53px] w-14 items-center justify-center rounded-[9px] ${i === "overlap" ? "bg-[#e2e2e2]" : ""}`}>
          <Icon name={i} />
        </button>
      ))}
    </div>
  </aside>
)

const items: { label: string; icon?: string; key?: string }[][] = [
  [{ label: "Öffnen" }],
  [
    { label: "Neuer Ordner..." }, { label: "Umbenennen..." },
    { label: "Neudefinieren mit aktuellen Fenster-Einstellungen" }, { label: "Löschen", icon: "del" },
  ],
  [{ label: "Als Transparentpause anzeigen" }],
  [{ label: "Auf Layout platzieren" }],
  [{ label: "Neues 3D-Dokument aus dem Grundriss...", icon: "m3d" }],
  [{ label: "Verknüpfte Marker finden..." }],
  [{ label: "Geschoss-Einstellungen...", icon: "story", key: "⌘ 7" }, { label: "Elemente nach Geschossen bearbeiten...", icon: "elem" }],
]

// hand-drawn marker frame, a few rough passes over the same rectangle
const rough = (k: number) => {
  const pts: string[] = []
  const j = (n: number) => {
    const r = Math.sin(n * 12.9898 + k * 78.233) * 43758.5453
    return (r - Math.floor(r) - 0.5) * 7
  }
  for (let x = 5; x < 775; x += 4) pts.push(`${x} ${5 + j(x)}`)
  for (let y = 5; y < 83; y += 4) pts.push(`${776 + j(y + 900)} ${y}`)
  for (let x = 775; x > 5; x -= 4) pts.push(`${x} ${83 + j(x + 1800)}`)
  for (let y = 83; y > 5; y -= 4) pts.push(`${4 + j(y + 2700)} ${y}`)
  return `M${pts.map((p) => p.replace(/(\.\d)\d+/g, "$1")).join("L")}Z`
}

const ContextMenu = () => (
  <div className="absolute top-[643px] right-[310px] w-[757px] rounded-[24px] border-2 border-[#d8d8d8] bg-[#b2b2b2] px-[7px] py-[9px] text-[25px] text-[#1c1c1c] shadow-[0_12px_40px_rgba(0,0,0,0.3),0_0_2px_rgba(0,0,0,0.6)]">
    {items.map((g, i) => (
      <div key={i}>
        {g.map((m) => (
          <button key={m.label} className="flex h-12 w-full items-center px-[22px] text-left">
            {m.icon && <Icon name={m.icon} className={m.icon === "del" ? "mr-[14px] ml-[4px] size-[30px]" : "mr-3 size-9"} />}
            {m.label}
            {m.key && <span className="ml-auto text-[#868686]">{m.key}</span>}
          </button>
        ))}
        <div className="mx-[22px] my-[10px] h-[2px] bg-[#a0a0a0]"></div>
      </div>
    ))}
    <button className="flex h-12 w-full items-center rounded-[12px] bg-[#5590f4] px-[22px] text-left font-medium text-white">
      <Icon name="viewset" className="mr-3 size-9" />
      Ausschnitt-Einstellungen...
    </button>
    <svg viewBox="0 0 780 88" className="pointer-events-none absolute bottom-[-12px] left-[-14px] h-[88px] w-[780px] overflow-visible" fill="none" stroke="#ee53f5" strokeWidth="4" strokeLinejoin="round" aria-hidden="true">
      <path d={rough(1)} />
      <path d={rough(2)} />
      <path d={rough(3)} />
    </svg>
  </div>
)

const App = () => {
  return (
    <div className="flex min-h-screen bg-white px-28 pt-[75px] pb-[148px] font-['Inter',sans-serif] text-[#222]">
      <div className="flex min-w-0 flex-1 flex-col overflow-hidden rounded-[26px] border border-[#a8a8a8] bg-[#ebebeb] shadow-[0_36px_80px_rgba(0,0,0,0.45),0_0_30px_rgba(0,0,0,0.15)]">
        <header className="relative flex h-[57px] items-center justify-center border-b-2 border-[#c8c8c8] bg-[#f3f4f6]">
          <div className="absolute left-[15px] flex gap-4">
            <button aria-label="Schließen" className="size-6 rounded-full border border-[#d35a4c] bg-[#ed6a5e]"></button>
            <button aria-label="Minimieren" className="size-6 rounded-full border border-[#d9a441] bg-[#f5bf4f]"></button>
            <button aria-label="Zoomen" className="size-6 rounded-full border border-[#55a846] bg-[#61c554]"></button>
          </div>
          <svg viewBox="0 0 24 30" className="mr-3 h-[30px] w-6" fill="#fff" stroke="#c8c8c8" aria-hidden="true">
            <path d="M1 1H16L23 8V29H1ZM16 1V8H23M6 14H19V26H6ZM6 20H19" />
            <path d="M3 8C4 2 8 2 10 7" stroke="#4a63b8" fill="none" strokeWidth="1.5" />
          </svg>
          <h1 className="text-[26px] font-bold text-[#4a4a4a]">Deutsches Archicad Demoprojekt v29.pln [Nur lesen]</h1>
        </header>
        <div className="text-[#263238]">
          <Toolbars />
        </div>
        <div className="relative flex min-h-0 flex-1">
          <Toolbox />
          <Center />
          <Navigator />
          <ContextMenu />
        </div>
        <footer className="flex h-[50px] items-center justify-between border-t-2 border-[#e3e3e3] pr-6 pb-2 pl-[13px] text-[22px]">
          <p>Klicken Sie mit dem Cursor auf ein Element oder ziehen Sie einen Auswahlbereich auf. Drücken Sie für Morphbearbeitung Strg/Ctrl+Umsch, um zwischen Element-/Unterelement-Auswahl zu wechseln.</p>
          <div className="flex items-center text-[#263238]">
            <Icon name="windows" className="size-8" />
            <div className="mx-[21px] h-7 w-[2px] bg-[#999]"></div>
            <a href="#" className="font-['Open_Sans',sans-serif] text-[27px] leading-7"><span className="font-medium">GRAPHISOFT</span> <span className="font-light">ID</span></a>
          </div>
        </footer>
      </div>
    </div>
  )
}

export default App
